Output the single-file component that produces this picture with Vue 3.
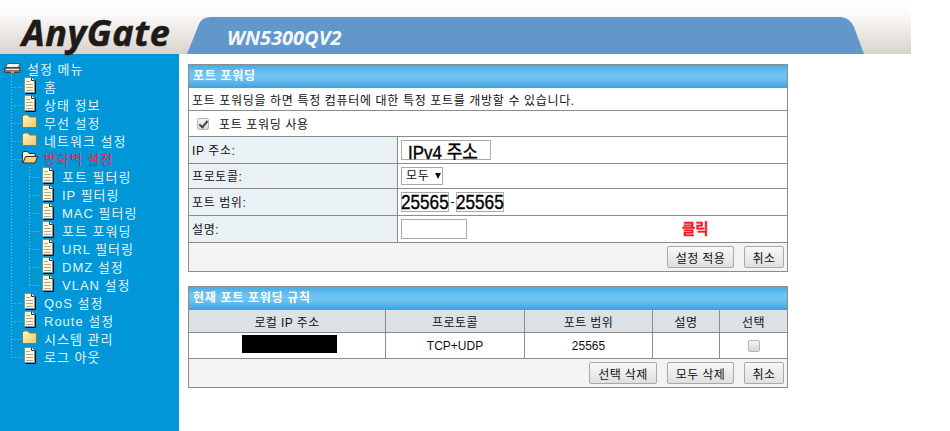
<script setup>
const tree = [
  { label: '설정 메뉴', level: 0, icon: 'server' },
  { label: '홈', level: 1, icon: 'doc' },
  { label: '상태 정보', level: 1, icon: 'doc' },
  { label: '무선 설정', level: 1, icon: 'folder' },
  { label: '네트워크 설정', level: 1, icon: 'folder' },
  { label: '방화벽 설정', level: 1, icon: 'open', active: true },
  { label: '포트 필터링', level: 2, icon: 'doc' },
  { label: 'IP 필터링', level: 2, icon: 'doc' },
  { label: 'MAC 필터링', level: 2, icon: 'doc' },
  { label: '포트 포워딩', level: 2, icon: 'doc' },
  { label: 'URL 필터링', level: 2, icon: 'doc' },
  { label: 'DMZ 설정', level: 2, icon: 'doc' },
  { label: 'VLAN 설정', level: 2, icon: 'doc' },
  { label: 'QoS 설정', level: 1, icon: 'doc' },
  { label: 'Route 설정', level: 1, icon: 'doc' },
  { label: '시스템 관리', level: 1, icon: 'folder' },
  { label: '로그 아웃', level: 1, icon: 'doc' },
]
const dots = tree.map((t, i) => ({ i, level: t.level })).filter(t => t.level > 0)
  .map(t => {
    const y = t.i * 18 + 10.5
    const x = t.level === 1 ? 11.5 : 29.5
    return `M${x} ${y}H${x + 11}`
  }).join('') + 'M11.5 16V298.5M29.5 108V226.5'
const fields = [
  { label: 'IP 주소:', kind: 'ip', tall: true },
  { label: '프로토콜:', kind: 'proto' },
  { label: '포트 범위:', kind: 'range', tall: true },
  { label: '설명:', kind: 'desc', tall: true },
]
</script>

<template>
  <div class="page">
    <header class="top">
      <svg class="tab" width="911" height="54" viewBox="0 0 911 54" aria-hidden="true">
        <path d="M187 54 L199 24 Q202 17 211 17 H841 Q850 18 854 27 L864 54 Z" fill="#6298c9" />
      </svg>
      <div class="logo">AnyGate</div>
      <div class="model">WN5300QV2</div>
    </header>

    <div class="body">
      <aside class="side">
        <nav class="tree">
          <svg class="dots" width="179" height="310" aria-hidden="true">
            <path :d="dots" fill="none" stroke="#8dbcc8" stroke-width="1" stroke-dasharray="1 2" />
          </svg>
          <div v-for="item in tree" :key="item.label" class="node" :class="['lv' + item.level, { active: item.active }]">
            <svg v-if="item.icon === 'server'" class="ico" width="17" height="16" viewBox="0 0 17 16" preserveAspectRatio="xMinYMid">
              <path d="M3.500 3.500H16L14.500 7.500H1.500Z" fill="#f0f0f0" stroke="#555" />
              <path d="M.5 7.500H16V12.500H.5Z" fill="#777" stroke="#444" />
              <path d="M2 9.500H15" stroke="#e8e8e8" />
              <rect x="7" y="11" width="3" height="2" fill="#f0a020" />
            </svg>
            <svg v-else-if="item.icon === 'doc'" class="ico" width="14" height="18" viewBox="0 0 14 18" preserveAspectRatio="xMinYMid">
              <path d="M1.500 .5H8.500L11.500 3.500V15.500H1.500Z" fill="#fdf8dc" stroke="#8a8a8a" />
              <path d="M12.500 3.500V16.500H2.500" fill="none" stroke="#111" />
              <path d="M8.500 .5V3.500H11.500" fill="#fff" stroke="#333" />
              <path d="M3 4.500H7M3 7.500H10M3 10.500H10M3 13.500H10" stroke="#a8a8a0" />
            </svg>
            <svg v-else-if="item.icon === 'folder'" class="ico shift" width="15" height="18" viewBox="0 0 15 18" preserveAspectRatio="xMinYMid">
              <defs>
                <linearGradient id="fg" x1="0" y1="0" x2="1" y2="1">
                  <stop offset="0" stop-color="#fff8c4" />
                  <stop offset="1" stop-color="#eec76a" />
                </linearGradient>
              </defs>
              <path d="M.5 14.500V3.500L2 2H6L7.500 4H14.500V14.500Z" fill="url(#fg)" stroke="#8a7a3a" />
            </svg>
            <svg v-else class="ico shift" width="16" height="18" viewBox="0 0 16 18" preserveAspectRatio="xMinYMid">
              <path d="M.5 13.500V3.500L2 2.500H5.500L7 4.500H13V13.500Z" fill="#fff6bc" stroke="#333" />
              <path d="M1 14L3.500 7.500H15.500L13 14Z" fill="#f3d37c" stroke="#333" />
            </svg>
            <span class="lbl">{{ item.label }}</span>
          </div>
        </nav>
      </aside>

      <main class="main">
        <section class="panel">
          <h2 class="title">포트 포워딩</h2>
          <p class="row intro">포트 포워딩을 하면 특정 컴퓨터에 대한 특정 포트를 개방할 수 있습니다.</p>
          <label class="row enable">
            <input type="checkbox" class="cb" checked />
            <span>포트 포워딩 사용</span>
          </label>
          <div v-for="f in fields" :key="f.kind" class="field" :class="{ tall: f.tall }">
            <div class="key">{{ f.label }}</div>
            <div class="val">
              <input v-if="f.kind === 'ip'" class="box big ip" type="text" value="IPv4 주소" />
              <span v-else-if="f.kind === 'proto'" class="selwrap">
                <select class="sel">
                  <option>모두</option>
                </select>
              </span>
              <template v-else-if="f.kind === 'range'">
                <input class="box big port" type="text" value="25565" />
                <span class="dash">-</span>
                <input class="box big port" type="text" value="25565" />
              </template>
              <template v-else>
                <input class="box plain" type="text" />
                <span class="click">클릭</span>
              </template>
            </div>
          </div>
          <div class="foot">
            <button class="btn">설정 적용</button>
            <button class="btn cancel">취소</button>
          </div>
        </section>

        <section class="panel second">
          <h2 class="title">현재 포트 포워딩 규칙</h2>
          <div class="rules head">
            <div>로컬 IP 주소</div>
            <div>프로토콜</div>
            <div>포트 범위</div>
            <div>설명</div>
            <div>선택</div>
          </div>
          <div class="rules data">
            <div><span class="mask"></span></div>
            <div>TCP+UDP</div>
            <div>25565</div>
            <div></div>
            <div><input type="checkbox" class="cb" /></div>
          </div>
          <div class="foot">
            <button class="btn wide">선택 삭제</button>
            <button class="btn">모두 삭제</button>
            <button class="btn cancel">취소</button>
          </div>
        </section>
      </main>
    </div>
  </div>
</template>

<style>
html, body { margin: 0; background: #fff; }
</style>

<style scoped>
.page {
  width: 950px;
  height: 431px;
  overflow: hidden;
  background: #fff;
  font-family: "Liberation Sans", "Noto Sans CJK KR", sans-serif;
  font-size: 12px;
  color: #111;
}
.top {
  position: relative;
  width: 911px;
  height: 54px;
  background: linear-gradient(#fff 4px, #fbfaf8 14px, #e9e5e1 36px, #d8d2cc 54px);
}
.tab { position: absolute; left: 0; top: 0; }
.logo {
  position: absolute;
  left: 22px;
  top: 8px;
  font-family: "Open Sans", sans-serif;
  font-weight: 700;
  font-style: italic;
  font-size: 36px;
  line-height: 50px;
  letter-spacing: 0.6px;
  color: #1e1a18;
  -webkit-text-stroke: 0.6px #1e1a18;
}
.model {
  position: absolute;
  left: 227px;
  top: 24px;
  font-family: "Open Sans", sans-serif;
  font-weight: 700;
  font-style: italic;
  font-size: 20px;
  line-height: 28px;
  color: #f4f8fc;
}
.body { display: flex; height: 377px; }
.side { width: 179px; flex: none; background: #0097d9; padding-top: 5px; box-sizing: border-box; }
.tree { position: relative; }
.dots { position: absolute; left: 0; top: 0; }
.node {
  position: relative;
  display: flex;
  align-items: center;
  height: 18px;
  color: #e4f3fb;
  font-size: 13px;
  white-space: nowrap;
}
.lbl { letter-spacing: 1px; }
.lv0 { padding-left: 4px; }
.lv0 .ico { margin-right: 6px; }
.lv1 { padding-left: 23px; }
.lv2 { padding-left: 41px; }
.lv1 .ico, .lv2 .ico { width: 16px; margin-right: 5px; }
.lv1 .shift { margin-left: -1px; margin-right: 6px; }
.active { color: #ff1a3c; }
.main { padding: 10px 0 0 9px; }
.panel { width: 600px; box-sizing: border-box; border: 1px solid #8c8c8c; }
.second { margin-top: 14px; }
.title {
  margin: 0;
  height: 23px;
  box-sizing: border-box;
  padding-left: 4px;
  border-bottom: 1px solid #8c8c8c;
  background: linear-gradient(#47ace7, #6fc3f2 40%, #6ec2f1 60%, #3ea7e5);
  color: #fff;
  font-size: 12px;
  font-weight: 700;
  line-height: 23px;
  letter-spacing: 0.7px;
}
.row {
  display: flex;
  align-items: center;
  box-sizing: border-box;
  margin: 0;
  border-bottom: 1px solid #8c8c8c;
  letter-spacing: 0.65px;
}
.intro { height: 23px; padding-left: 3px; }
.enable { height: 26px; padding-left: 8px; gap: 10px; }
.cb {
  appearance: none;
  position: relative;
  width: 12px;
  height: 12px;
  margin: 0;
  box-sizing: border-box;
  border: 1px solid #b5b5b5;
  border-radius: 2px;
  background: linear-gradient(#f4f4f4, #d8d8d8);
}
.cb:checked::after {
  content: "";
  position: absolute;
  left: 3px;
  top: 0;
  width: 3px;
  height: 7px;
  border: solid #444;
  border-width: 0 2px 2px 0;
  transform: rotate(40deg);
}
.field {
  display: grid;
  grid-template-columns: 209px 1fr;
  height: 25px;
  box-sizing: border-box;
  border-bottom: 1px solid #8c8c8c;
}
.tall { height: 27px; }
.key {
  display: flex;
  align-items: center;
  padding: 0 0 1px 3px;
  background: #e9f1f5;
  border-right: 1px solid #8c8c8c;
  letter-spacing: 0.6px;
}
.val { display: flex; align-items: center; padding-left: 3px; }
.box {
  box-sizing: border-box;
  margin: 0;
  border: 1px solid #a9a9a9;
  background: #fff;
  font-family: "Liberation Sans", "Noto Sans CJK KR", sans-serif;
  color: #000;
  outline: none;
}
.big {
  height: 20px;
  border: 0;
  box-shadow: inset 0 0 0 1px #a9a9a9;
  transform-origin: left center;
  -webkit-text-stroke: 0.4px #000;
  font-weight: 400;
}
.ip {
  width: 101px;
  margin-right: -11px;
  padding: 0 0 0 8px;
  font-size: 19px;
  transform: scaleX(0.89);
}
.port {
  width: 56px;
  margin-right: -8px;
  padding: 0;
  font-size: 20px;
  transform: scaleX(0.857);
}
.dash { width: 7px; text-align: center; line-height: 1; }
.plain { width: 66px; height: 20px; }
.selwrap { position: relative; display: block; width: 42px; height: 18px; }
.selwrap::after {
  content: "";
  position: absolute;
  right: 2px;
  top: 6px;
  border: 3.5px solid transparent;
  border-top: 6px solid #111;
  border-bottom: 0;
  pointer-events: none;
}
.sel {
  appearance: none;
  display: block;
  box-sizing: border-box;
  width: 42px;
  height: 18px;
  margin: 0;
  padding: 0 0 0 4px;
  border: 1px solid #a9a9a9;
  border-radius: 0;
  background: #fff;
  font-family: inherit;
  font-size: 12px;
  letter-spacing: 0.6px;
  color: #111;
}
.click {
  margin-left: 215px;
  color: #ee1c25;
  font-size: 14.5px;
  font-weight: 700;
  line-height: 1;
  -webkit-text-stroke: 0.3px #ee1c25;
}
.foot {
  display: flex;
  justify-content: flex-end;
  align-items: center;
  height: 28px;
  box-sizing: border-box;
  padding-right: 3px;
  gap: 10px;
  background: #f3f3f3;
}
.btn {
  box-sizing: border-box;
  width: 67px;
  height: 22px;
  margin: 0;
  padding: 0;
  border: 1px solid #a9a9a9;
  border-radius: 2px;
  background: linear-gradient(#f8f8f8, #dfdfdf);
  font-family: inherit;
  font-size: 12px;
  letter-spacing: 0.4px;
  color: #111;
}
.wide { width: 68px; }
.cancel { width: 40px; }
.rules {
  display: grid;
  grid-template-columns: 197px 139px 128px 67px 67px;
  border-bottom: 1px solid #8c8c8c;
  box-sizing: border-box;
  text-align: center;
}
.rules > div {
  display: flex;
  align-items: center;
  justify-content: center;
  border-right: 1px solid #8c8c8c;
}
.rules > div:last-child { border-right: 0; }
.head { height: 23px; background: #dbe2e6; letter-spacing: 0.4px; }
.data { height: 26px; }
.mask { display: block; width: 95px; height: 18px; margin: 0 0 4px 4px; background: #000; }
</style>
